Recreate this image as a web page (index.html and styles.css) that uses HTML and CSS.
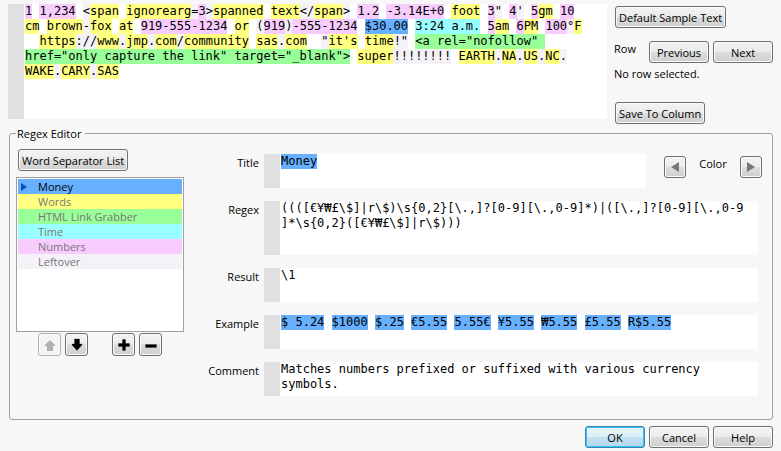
FILE: index.html
```html
<!DOCTYPE html>
<html lang="en">
  <head>
    <meta charset="UTF-8">
    <title>Regex Editor</title>
    <link rel="stylesheet" href="styles.css">
  </head>
  <body>
    <div class="top">
      <div class="field sample">
        <div class="text" role="textbox" aria-label="Sample text" aria-multiline="true" contenteditable="true" spellcheck="false"><mark class="number">1</mark> <mark class="number">1,234</mark> <mark class="left">&lt;</mark><mark class="word">span</mark> <mark class="word">ignorearg</mark><mark class="left">=</mark><mark class="number">3</mark><mark class="left">&gt;</mark><mark class="word">spanned</mark> <mark class="word">text</mark><mark class="left">&lt;/</mark><mark class="word">span</mark><mark class="left">&gt;</mark> <mark class="number">1.2</mark> <mark class="number">-3.14E+0</mark> <mark class="word">foot</mark> <mark class="number">3</mark><mark class="left">"</mark> <mark class="number">4</mark><mark class="left">'</mark> <mark class="number">5</mark><mark class="word">gm</mark> <mark class="number">10</mark>
<mark class="word">cm</mark> <mark class="word">brown</mark><mark class="left">-</mark><mark class="word">fox</mark> <mark class="word">at</mark> <mark class="number">919-555-1234</mark> <mark class="word">or</mark> <mark class="left">(</mark><mark class="number">919</mark><mark class="left">)</mark><mark class="number">-555-1234</mark> <mark class="money">$30.00</mark> <mark class="time">3:24 a.m.</mark> <mark class="number">5</mark><mark class="word">am</mark> <mark class="number">6</mark><mark class="word">PM</mark> <mark class="number">100</mark><mark class="left">°</mark><mark class="word">F</mark>
  <mark class="word">https</mark><mark class="left">://</mark><mark class="word">www</mark><mark class="left">.</mark><mark class="word">jmp</mark><mark class="left">.</mark><mark class="word">com</mark><mark class="left">/</mark><mark class="word">community</mark> <mark class="word">sas</mark><mark class="left">.</mark><mark class="word">com</mark>  <mark class="left">"</mark><mark class="word">it's</mark> <mark class="word">time</mark><mark class="left">!"</mark> <mark class="link">&lt;a rel="nofollow" </mark>
<mark class="link">href="only capture the link" target="_blank"&gt;</mark> <mark class="word">super</mark><mark class="left">!!!!!!!!</mark> <mark class="word">EARTH</mark><mark class="left">.</mark><mark class="word">NA</mark><mark class="left">.</mark><mark class="word">US</mark><mark class="left">.</mark><mark class="word">NC</mark><mark class="left">.</mark>
<mark class="word">WAKE</mark><mark class="left">.</mark><mark class="word">CARY</mark><mark class="left">.</mark><mark class="word">SAS</mark></div>
      </div>
      <div class="side">
        <button type="button">Default Sample Text</button>
        <div class="row-nav">
          <span class="row-label">Row</span>
          <button type="button" class="wide">Previous</button>
          <button type="button" class="wide">Next</button>
        </div>
        <p class="status">No row selected.</p>
        <button type="button">Save To Column</button>
      </div>
    </div>

    <fieldset class="editor">
      <legend>Regex Editor</legend>
      <div class="patterns">
        <button type="button">Word Separator List</button>
        <ul class="list" role="listbox" aria-label="Patterns">
          <li class="money selected" role="option" aria-selected="true">
            <svg width="6" height="8" viewBox="0 0 6 8"><path d="M0 0L6 4L0 8Z" fill="#0a4fc0"/></svg>Money
          </li>
          <li class="word" role="option">Words</li>
          <li class="link" role="option">HTML Link Grabber</li>
          <li class="time" role="option">Time</li>
          <li class="number" role="option">Numbers</li>
          <li class="left" role="option">Leftover</li>
        </ul>
        <div class="tools">
          <button type="button" class="icon" aria-label="Move up" disabled>
            <svg width="12" height="14" viewBox="0 0 12 14"><path d="M6 2L11 7V8H9V13H3V8H1V7Z" fill="#b0b0b0"/></svg>
          </button>
          <button type="button" class="icon" aria-label="Move down">
            <svg width="12" height="14" viewBox="0 0 12 14"><path d="M3.5 1H8.5V6H11V7L6 12.5L1 7V6H3.5Z" fill="#000" stroke="#aaa" stroke-width="1" paint-order="stroke"/></svg>
          </button>
          <button type="button" class="icon add" aria-label="Add">
            <svg width="14" height="14" viewBox="0 0 14 14"><path d="M5.5 1.5H8.5V5.5H12.5V8.5H8.5V12.5H5.5V8.5H1.5V5.5H5.5Z" fill="#000" stroke="#aaa" stroke-width="1" paint-order="stroke"/></svg>
          </button>
          <button type="button" class="icon" aria-label="Remove">
            <svg width="14" height="14" viewBox="0 0 14 14"><path d="M1.5 6.5H12.5V9.5H1.5Z" fill="#000" stroke="#aaa" stroke-width="1" paint-order="stroke"/></svg>
          </button>
        </div>
      </div>

      <div class="form">
        <label for="title">Title</label>
        <div class="title-row">
          <div class="field"><div class="text"><input id="title" class="money" type="text" value="Money"></div></div>
          <div class="color">
            <button type="button" class="icon" aria-label="Previous color">
              <svg width="8" height="10" viewBox="0 0 8 10"><path d="M8 0V10L0 5Z" fill="#777"/></svg>
            </button>
            <span>Color</span>
            <button type="button" class="icon" aria-label="Next color">
              <svg width="8" height="10" viewBox="0 0 8 10"><path d="M0 0V10L8 5Z" fill="#777"/></svg>
            </button>
          </div>
        </div>

        <label for="regex">Regex</label>
        <div class="field tall"><textarea id="regex" class="text code" spellcheck="false">((([€¥₩£\$]|r\$)\s{0,2}[\.,]?[0-9][\.,0-9]*)|([\.,]?[0-9][\.,0-9]*\s{0,2}([€¥₩£\$]|r\$)))</textarea></div>

        <label for="result">Result</label>
        <div class="field"><textarea id="result" class="text" spellcheck="false">\1</textarea></div>

        <label id="example-label">Example</label>
        <div class="field">
          <div class="text" role="textbox" aria-labelledby="example-label" contenteditable="true" spellcheck="false"><mark class="money">$ 5.24</mark> <mark class="money">$1000</mark> <mark class="money">$.25</mark> <mark class="money">€5.55</mark> <mark class="money">5.55€</mark> <mark class="money">¥5.55</mark> <mark class="money">₩5.55</mark> <mark class="money">£5.55</mark> <mark class="money">R$5.55</mark></div>
        </div>

        <label for="comment">Comment</label>
        <div class="field"><textarea id="comment" class="text" spellcheck="false">Matches numbers prefixed or suffixed with various currency symbols.</textarea></div>
      </div>
    </fieldset>

    <div class="footer">
      <button type="button" class="wide ok">OK</button>
      <button type="button" class="wide">Cancel</button>
      <button type="button" class="wide">Help</button>
    </div>
  </body>
</html>
```
FILE: styles.css
```css
* {
  box-sizing: border-box;
}

body {
  margin: 0;
  padding: 4px 8px 0;
  background: #f7f7f7;
  color: #000;
  font-family: "Open Sans", "Noto Sans", sans-serif;
  font-size: 11px;
  line-height: 15px;
}

button {
  height: 22px;
  padding: 0 3px;
  border: 1px solid #707070;
  border-radius: 3px;
  background: linear-gradient(#f3f3f3, #ebebeb 50%, #dddddd 50%, #cfcfcf);
  box-shadow: inset 0 0 0 1px #fafafa;
  color: #000;
  font: inherit;
  white-space: nowrap;
}

.wide {
  width: 60px;
}

.icon {
  display: flex;
  align-items: center;
  justify-content: center;
  width: 23px;
  height: 23px;
  padding: 0;
}

.icon:disabled {
  border-color: #adb2b5;
  background: #f4f4f4;
}

/* highlight colors */
mark {
  padding-bottom: 1px;
  color: inherit;
}

.money { background: #66b0ff; }
.word { background: #ffff80; }
.link { background: #99ff99; }
.time { background: #99ffff; }
.number { background: #f8ccff; }
.left { background: #f4f2f7; }

/* text boxes with the grey gutter */
.field {
  display: flex;
  flex: 1;
  min-width: 0;
  min-height: 34px;
  border-left: 16px solid #e0e0e0;
  background: #fff;
}

.field.tall {
  min-height: 54px;
}

.text {
  flex: 1;
  min-width: 0;
  height: auto;
  margin: 0;
  padding: 0 12px 0 1px;
  border: none;
  outline: none;
  resize: none;
  overflow: hidden;
  background: none;
  color: #000;
  font-family: "DejaVu Sans Mono", "Liberation Mono", monospace;
  font-size: 12px;
  line-height: 15px;
  white-space: pre-wrap;
}

.code {
  line-break: anywhere;
}

.text input {
  display: block;
  width: 5ch;
  height: 15px;
  padding: 0;
  border: none;
  font: inherit;
}

/* top part */
.top {
  display: flex;
  align-items: flex-start;
  gap: 7px;
}

.sample {
  min-height: 115px;
}

.side {
  display: flex;
  flex-direction: column;
  align-items: flex-start;
  padding-top: 2px;
}

.side > button {
  margin-left: 1px;
}

.row-nav {
  display: flex;
  gap: 4px;
  margin-top: 13px;
}

.row-label {
  width: 31px;
}

.status {
  margin: 3px 0 21px;
}

/* editor */
.editor {
  display: flex;
  gap: 18px;
  margin: 2px 0 0 1px;
  padding: 8px 10px 23px 6px;
  border: 1px solid #a0a0a0;
  border-radius: 3px;
}

.editor legend {
  padding: 0 4px 0 1px;
}

.patterns {
  width: 168px;
}

.patterns > button {
  margin-left: 2px;
}

.list {
  height: 155px;
  margin: 6px 0 0;
  padding: 1px;
  border: 1px solid #a0a0a0;
  background: #fff;
  list-style: none;
}

.list li {
  position: relative;
  height: 15px;
  padding-left: 20px;
  color: #777;
}

.list .selected {
  color: #000;
}

.list svg {
  position: absolute;
  top: 4px;
  left: 3px;
}

.tools {
  display: flex;
  gap: 4px;
  margin: 1px 0 0 22px;
}

.tools .add {
  margin-left: 20px;
}

.form {
  display: grid;
  flex: 1;
  grid-template-columns: 57px 1fr;
  gap: 13px 5px;
  align-content: start;
  padding-top: 5px;
}

.form label {
  padding-top: 1px;
  text-align: right;
}

.form > .field {
  margin-right: 4px;
}

.title-row {
  display: flex;
  gap: 18px;
}

.color {
  display: flex;
  gap: 12px;
  padding-top: 2px;
}

.color .icon {
  width: 22px;
  height: 22px;
}

.color span {
  width: 30px;
  text-align: center;
}

/* footer */
.footer {
  display: flex;
  justify-content: flex-end;
  gap: 4px;
  margin-top: 6px;
}

.ok {
  border-color: #3c7fb1;
  background: linear-gradient(#eaf4fa, #dceef8 50%, #c2e0f0 50%, #b4d8ec);
  box-shadow: inset 0 0 0 1px #2ec8f5;
}
```
